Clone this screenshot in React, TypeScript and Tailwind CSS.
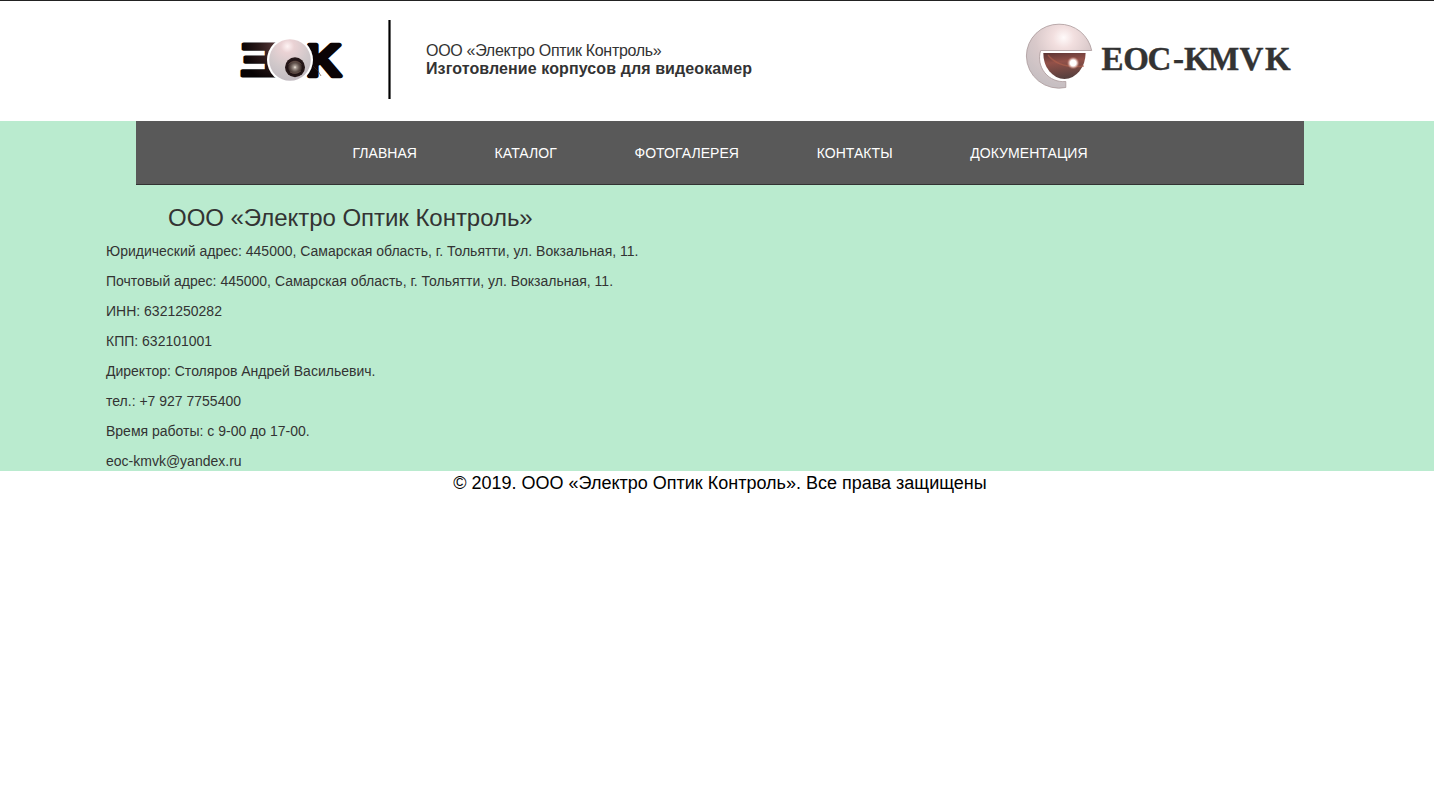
const navItems = ["ГЛАВНАЯ", "КАТАЛОГ", "ФОТОГАЛЕРЕЯ", "КОНТАКТЫ", "ДОКУМЕНТАЦИЯ"];

const details = [
  "Юридический адрес: 445000, Самарская область, г. Тольятти, ул. Вокзальная, 11.",
  "Почтовый адрес: 445000, Самарская область, г. Тольятти, ул. Вокзальная, 11.",
  "ИНН: 6321250282",
  "КПП: 632101001",
  "Директор: Столяров Андрей Васильевич.",
  "тел.: +7 927 7755400",
  "Время работы: с 9-00 до 17-00.",
  "eoc-kmvk@yandex.ru",
];

function LensLogo() {
  return (
    <svg width="118" height="80" viewBox="232 20 118 80" className="block shrink-0 overflow-visible">
      <defs>
        <radialGradient id="lensBody" cx="0.44" cy="0.17" r="0.8">
          <stop offset="0" stopColor="#fff4f4" />
          <stop offset="0.2" stopColor="#ead2d4" />
          <stop offset="0.65" stopColor="#d0c8ca" />
          <stop offset="1" stopColor="#c3bcc2" />
        </radialGradient>
        <radialGradient id="lensGlass">
          <stop offset="0" stopColor="#f4eadf" />
          <stop offset="0.16" stopColor="#a59991" />
          <stop offset="0.4" stopColor="#6a5c56" />
          <stop offset="0.62" stopColor="#41322f" />
          <stop offset="0.72" stopColor="#201315" />
          <stop offset="1" stopColor="#2a1b1b" />
        </radialGradient>
        <radialGradient id="lensLetter" gradientUnits="userSpaceOnUse" cx="2" cy="-30" r="36">
          <stop offset="0" stopColor="#5a3b3b" />
          <stop offset="0.5" stopColor="#2a1919" />
          <stop offset="1" stopColor="#070203" />
        </radialGradient>
      </defs>
      <g fontFamily="Liberation Sans, Arial, sans-serif" fontWeight="700">
        <text
          transform="translate(279 76.4) scale(-1 1)"
          x="0"
          y="0"
          fontSize="47"
          textLength="39"
          lengthAdjust="spacingAndGlyphs"
          fill="url(#lensLetter)"
          stroke="url(#lensLetter)"
          strokeWidth="3"
          strokeLinejoin="round"
        >
          E
        </text>
        <text
          x="306"
          y="76"
          fontSize="45"
          textLength="35"
          lengthAdjust="spacingAndGlyphs"
          fill="#0b0405"
          stroke="#0b0405"
          strokeWidth="4.4"
          strokeLinejoin="round"
        >
          K
        </text>
      </g>
      <circle cx="290" cy="60" r="23" fill="#fff" />
      <circle cx="290" cy="60" r="20.8" fill="url(#lensBody)" />
      <circle cx="295" cy="67.3" r="10" fill="url(#lensGlass)" />
      <path d="M288.5 64.5a8 7 0 0 1 13 0M290 72q5 3 11-1" fill="none" stroke="#80665c" strokeWidth=".5" />
      <path d="M313 66q6 5 8 10" fill="none" stroke="#492717" strokeWidth=".7" opacity=".8" />
    </svg>
  );
}

function EyeLogo() {
  return (
    <svg width="272" height="72" viewBox="1022 20 272 72" className="block shrink-0">
      <defs>
        <radialGradient id="eyeShell" cx="0.57" cy="0.21" r="0.75">
          <stop offset="0" stopColor="#fffafa" />
          <stop offset="0.22" stopColor="#f2dfdf" />
          <stop offset="0.58" stopColor="#d9c9ca" />
          <stop offset="1" stopColor="#c7bfc2" />
        </radialGradient>
        <linearGradient id="eyeGlass" x1="0" y1="0" x2="0.2" y2="1">
          <stop offset="0" stopColor="#5b3434" />
          <stop offset="0.4" stopColor="#925149" />
          <stop offset="1" stopColor="#59403e" />
        </linearGradient>
        <radialGradient id="eyeGlint">
          <stop offset="0" stopColor="#fff" />
          <stop offset="0.45" stopColor="#fff" />
          <stop offset="0.65" stopColor="#ebc9c3" stopOpacity=".8" />
          <stop offset="1" stopColor="#ad6254" stopOpacity="0" />
        </radialGradient>
      </defs>
      <path
        d="M1091.7 50.5A32.7 32.7 0 0 0 1059 24.2A32.2 32 0 0 0 1026.4 56A32.7 32.3 0 0 0 1065.8 87.5V81.5A23.8 23.8 0 0 1 1040.7 50.5Z"
        fill="url(#eyeShell)"
        stroke="#a99899"
        strokeWidth=".8"
      />
      <path d="M1043.3 53H1085.6A21.2 26 0 0 1 1064.5 79A21.2 25.5 0 0 1 1043.3 53Z" fill="url(#eyeGlass)" />
      <path d="M1048 55Q1059 69 1084 66" fill="none" stroke="#b1614d" strokeWidth="1.3" opacity=".65" />
      <circle cx="1073.2" cy="63" r="6.5" fill="url(#eyeGlint)" />
      <text
        x="1101.5 1123.3 1147.5 1173 1184 1208 1239.5 1265"
        y="70"
        fontFamily="Liberation Serif, Times New Roman, serif"
        fontWeight="700"
        fontSize="33"
        fill="#333"
        stroke="#333"
        strokeWidth=".4"
      >
        EOC-KMVK
      </text>
    </svg>
  );
}

export default function App() {
  return (
    <div className="min-h-[789px] overflow-x-hidden bg-white font-['Liberation_Sans',Arial,sans-serif] text-sm leading-5 text-[#333]">
      <header className="flex h-[121px] items-start border-t border-[#222] pl-[232px]">
        <div className="mt-[19px]">
          <LensLogo />
        </div>
        <div className="ml-[38px] mt-[19px] h-[79px] w-[3px] border-x border-[#666] bg-black" />
        <div className="ml-[35px] mt-[41px] w-[420px] text-base leading-[18px]">
          <p className="tracking-[-0.3px]">ООО «Электро Оптик Контроль»</p>
          <p className="font-bold tracking-[0.1px]">Изготовление корпусов для видеокамер</p>
        </div>
        <div className="ml-[176px] mt-[19px]">
          <EyeLogo />
        </div>
      </header>
      <main className="h-[350px] bg-[#baebcf]">
        <nav className="ml-[136px] flex h-16 w-[1168px] items-center justify-center gap-[77.6px] border-b border-[#333] bg-[#595959] tracking-[0.06px] text-white">
          {navItems.map((item) => (
            <a key={item} href="#" className="whitespace-nowrap">
              {item}
            </a>
          ))}
        </nav>
        <h1 className="ml-[168px] pt-5 text-2xl leading-[26px] tracking-[-0.04px]">ООО «Электро Оптик Контроль»</h1>
        <div className="ml-[106px] mt-[10px] flex flex-col gap-[10px]">
          {details.map((line) => (
            <p key={line}>{line}</p>
          ))}
        </div>
      </main>
      <footer className="pl-[6px] text-center text-lg leading-6 text-black">
        © 2019. ООО «Электро Оптик Контроль». Все права защищены
      </footer>
    </div>
  );
}
